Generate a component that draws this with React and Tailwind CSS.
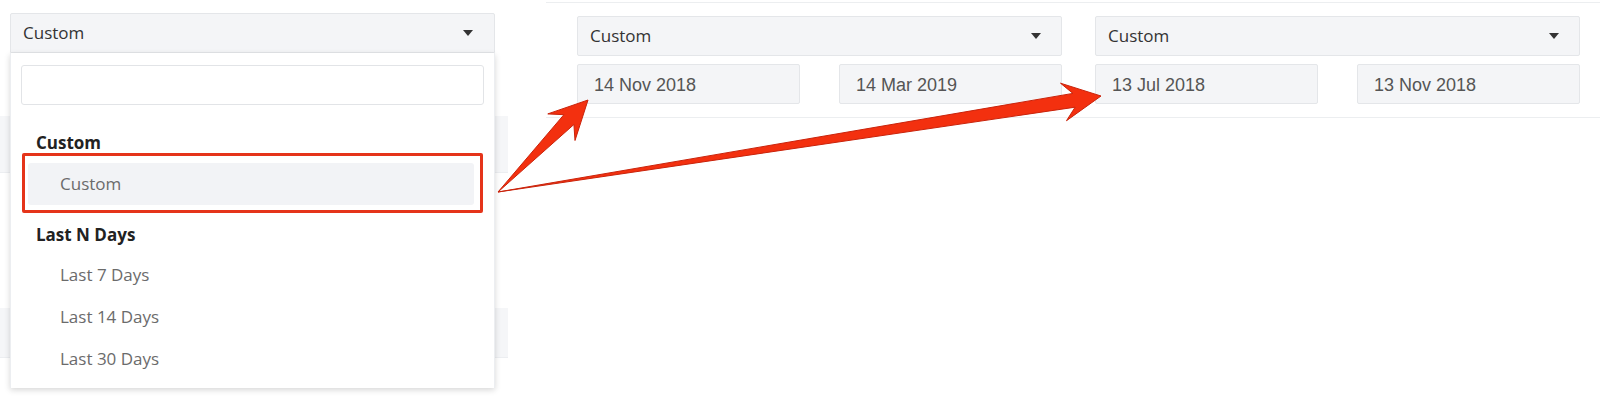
import React from "react";

const sans = { fontFamily: '"Open Sans", "Noto Sans", sans-serif' };

function Caret() {
  return (
    <svg width="10" height="6" viewBox="0 0 10 6" className="shrink-0">
      <path d="M0 0 L10 0 L5 6 Z" fill="#333" />
    </svg>
  );
}

function arrowPoints(tx, ty, hx, hy) {
  const dx = hx - tx;
  const dy = hy - ty;
  const len = Math.hypot(dx, dy);
  const ux = dx / len;
  const uy = dy / len;
  const nx = -uy;
  const ny = ux;
  const L = 38;
  const W = 19;
  const w = 7;
  const Ls = L * 0.72;
  const bs = [hx - ux * Ls, hy - uy * Ls];
  const bw = [hx - ux * L, hy - uy * L];
  const pts = [
    [tx, ty],
    [bs[0] + nx * w, bs[1] + ny * w],
    [bw[0] + nx * W, bw[1] + ny * W],
    [hx, hy],
    [bw[0] - nx * W, bw[1] - ny * W],
    [bs[0] - nx * w, bs[1] - ny * w],
  ];
  return pts.map((p) => p.map((v) => v.toFixed(1)).join(",")).join(" ");
}

function Arrows() {
  return (
    <svg
      className="absolute left-0 top-0 pointer-events-none"
      width="1600"
      height="407"
      viewBox="0 0 1600 407"
    >
      <polygon points={arrowPoints(498, 192, 588, 100)} fill="#f3300f" stroke="#c9230b" strokeWidth="1" strokeLinejoin="round" />
      <polygon points={arrowPoints(498, 192, 1101, 96)} fill="#f3300f" stroke="#c9230b" strokeWidth="1" strokeLinejoin="round" />
    </svg>
  );
}

function Panel({ from, to }) {
  return (
    <div className="w-[485px] flex flex-col gap-2">
      <div
        className="h-10 bg-[#f4f5f7] border border-[#e4e6e9] rounded-[2px] flex items-center justify-between pl-3 pr-[20px] text-[17px] text-[#333]"
        style={sans}
      >
        <span>Custom</span>
        <Caret />
      </div>
      <div className="flex justify-between" style={{ fontFamily: '"Liberation Sans", Arial, sans-serif' }}>
        <div className="w-[223px] h-10 bg-[#f4f5f7] border border-[#e4e6e9] rounded-[2px] flex items-center pl-4 pt-[2px] text-[18px] text-[#555]">
          {from}
        </div>
        <div className="w-[223px] h-10 bg-[#f4f5f7] border border-[#e4e6e9] rounded-[2px] flex items-center pl-4 pt-[2px] text-[18px] text-[#555]">
          {to}
        </div>
      </div>
    </div>
  );
}

function Item({ children }) {
  return (
    <div className="h-[42px] ml-[17px] mr-5 pl-8 flex items-center text-[17px] text-[#6b6b6b]">
      {children}
    </div>
  );
}

export default function App() {
  return (
    <div className="relative w-[1600px] h-[407px] bg-white overflow-hidden" style={sans}>
      <div className="flex">
        {/* left page column */}
        <div className="relative w-[546px] h-[407px] shrink-0">
          <div className="h-[116px]" />
          <div className="w-[508px] h-[57px] bg-[#f5f6f8] border-b border-[#eceef1]" />
          <div className="h-[135px]" />
          <div className="w-[508px] h-[50px] bg-[#f5f6f8] border-b border-[#eceef1]" />

          {/* open dropdown */}
          <div className="absolute left-[10px] top-[13px] w-[485px]">
            <div className="h-10 bg-[#f4f5f7] border border-[#e4e6e9] rounded-t-[2px] flex items-center justify-between pl-3 pr-[21px] text-[17px] text-[#333]">
              <span>Custom</span>
              <Caret />
            </div>
            <div className="bg-white h-[335px] shadow-[0_2px_6px_rgba(0,0,0,0.16)] border-x border-[#eceef1] pt-3 flex flex-col">
              <div className="mx-[10px] h-10 border border-[#e2e4e7] rounded-[3px] bg-white" />
              <div className="mt-7 pl-[25px] h-5 flex items-center text-[17px] font-bold text-[#222]">Custom</div>
              <div className="relative mt-[10px]">
                <div className="h-[42px] ml-[17px] mr-5 pl-8 flex items-center text-[17px] text-[#6b6b6b] bg-[#f2f3f6] rounded-[3px]">
                  Custom
                </div>
                <div className="absolute left-[11px] right-[11px] top-[-10px] bottom-[-8px] border-[3px] border-[#e5341a] rounded-[2px]" />
              </div>
              <div className="mt-5 pl-[25px] h-5 flex items-center text-[17px] font-bold text-[#222]">Last N Days</div>
              <div className="mt-[9px]">
                <Item>Last 7 Days</Item>
                <Item>Last 14 Days</Item>
                <Item>Last 30 Days</Item>
              </div>
            </div>
          </div>
        </div>

        {/* right area */}
        <div className="flex-1 mt-[2px] self-start border-y border-[#eceef0] pt-[13px] pb-[13px] pl-[31px] flex gap-[33px]">
          <Panel from="14 Nov 2018" to="14 Mar 2019" />
          <Panel from="13 Jul 2018" to="13 Nov 2018" />
        </div>
      </div>
      <Arrows />
    </div>
  );
}
